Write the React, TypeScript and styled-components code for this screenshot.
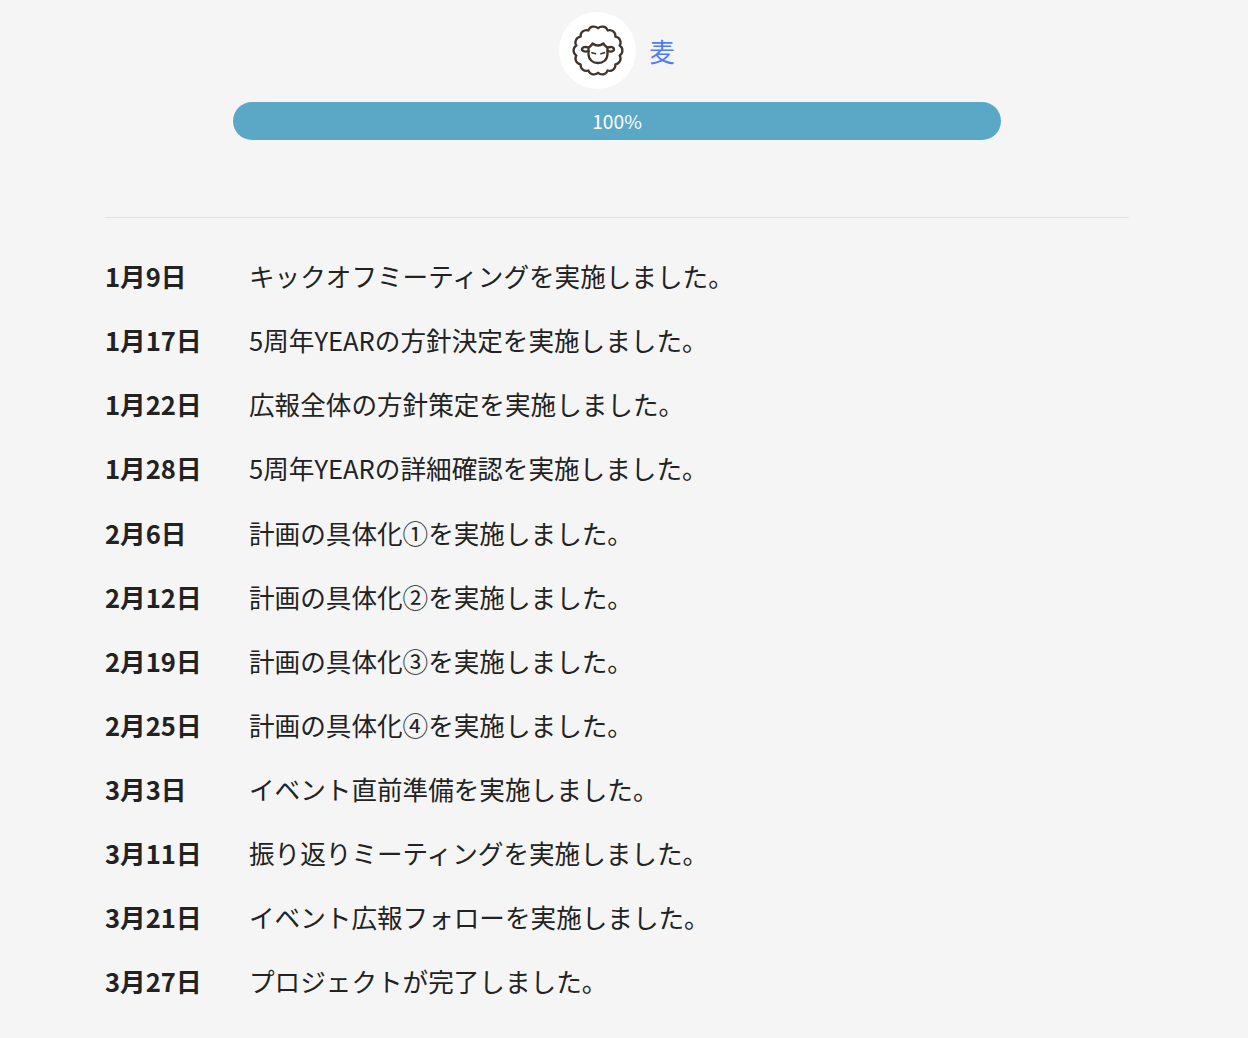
import React from 'react';
import styled, { createGlobalStyle } from 'styled-components';

const GlobalStyle = createGlobalStyle`
  html, body {
    margin: 0;
    padding: 0;
    background: #f5f5f5;
    overflow: hidden;
  }
  body {
    font-family: "Noto Sans CJK JP", "Noto Sans", sans-serif;
    color: #222;
  }
`;

const Page = styled.div`
  width: 1024px;
  margin-left: 105px;
  padding-top: 12px;
`;

const Member = styled.div`
  display: flex;
  align-items: center;
  justify-content: center;
  gap: 13px;
`;

const Avatar = styled.div`
  width: 77px;
  height: 77px;
  border-radius: 50%;
  background: #fff;
  display: flex;
  align-items: center;
  justify-content: center;
`;

const MemberName = styled.a`
  font-size: 25.6px;
  line-height: 38px;
  color: #4d7cfe;
  text-decoration: none;
`;

const Track = styled.div`
  width: 768px;
  height: 38px;
  margin: 13px auto 0;
  border-radius: 19px;
  background: #eee;
  overflow: hidden;
`;

const Fill = styled.div`
  height: 100%;
  background: #5ba8c6;
  color: #fff;
  font-size: 19.2px;
  line-height: 38px;
  text-align: center;
`;

const Divider = styled.hr`
  border: 0;
  border-top: 1px solid #e2e2e2;
  margin: 77px 0 0;
`;

const Timeline = styled.dl`
  margin: 25.67px 0 0;
  display: grid;
  grid-template-columns: 144px 1fr;
  grid-auto-rows: 64.09px;
  align-items: center;
`;

const Day = styled.dt`
  font-weight: 700;
  font-size: 25.6px;
`;

const Note = styled.dd`
  margin: 0;
  font-size: 25.6px;
  font-weight: 400;
`;

const scallop = (() => {
  const n = 14;
  const r = 22.2;
  const pts: string[] = [];
  for (let i = 0; i <= n; i++) {
    const a = (i / n) * Math.PI * 2 - Math.PI / 2;
    const x = 29 + r * Math.cos(a);
    const y = 28.5 + r * Math.sin(a);
    pts.push(i === 0 ? `M${x.toFixed(2)} ${y.toFixed(2)}` : `A5.8 5.8 0 0 1 ${x.toFixed(2)} ${y.toFixed(2)}`);
  }
  return pts.join(' ') + 'Z';
})();

const SheepIcon = () => (
  <svg width="58" height="58" viewBox="0 0 58 58" fill="none" stroke="#40352c" strokeWidth="2.3" strokeLinecap="round" strokeLinejoin="round">
    <path d={scallop} />
    <path d="M19.500 26c1-1.500 3-2 4-4.500 2 1.500 4 2 5.500 2s3.500-.5 5.500-2c1 2.500 3 3 4 4.500v6c0 6-4.500 9-9.500 9s-9.500-3-9.500-9z" />
    <path d="M19.500 25.500c-3-1-6.500-.5-6.500 1.800s3.500 2.700 6.500 1.700" />
    <path d="M38.500 25.500c3-1 6.500-.5 6.500 1.800s-3.500 2.700-6.500 1.700" />
    <path d="M23 30.700l3.600 1M35.500 30.700l-3.600 1" strokeWidth="1.700" />
  </svg>
);

const entries: [string, string][] = [
  ['1月9日', 'キックオフミーティングを実施しました。'],
  ['1月17日', '5周年YEARの方針決定を実施しました。'],
  ['1月22日', '広報全体の方針策定を実施しました。'],
  ['1月28日', '5周年YEARの詳細確認を実施しました。'],
  ['2月6日', '計画の具体化①を実施しました。'],
  ['2月12日', '計画の具体化②を実施しました。'],
  ['2月19日', '計画の具体化③を実施しました。'],
  ['2月25日', '計画の具体化④を実施しました。'],
  ['3月3日', 'イベント直前準備を実施しました。'],
  ['3月11日', '振り返りミーティングを実施しました。'],
  ['3月21日', 'イベント広報フォローを実施しました。'],
  ['3月27日', 'プロジェクトが完了しました。'],
];

export default function App() {
  return (
    <>
      <GlobalStyle />
      <Page>
        <Member>
          <Avatar>
            <SheepIcon />
          </Avatar>
          <MemberName href="#">麦</MemberName>
        </Member>
        <Track>
          <Fill>100%</Fill>
        </Track>
        <Divider />
        <Timeline>
          {entries.map(([day, note]) => (
            <React.Fragment key={day}>
              <Day>{day}</Day>
              <Note>{note}</Note>
            </React.Fragment>
          ))}
        </Timeline>
      </Page>
    </>
  );
}
